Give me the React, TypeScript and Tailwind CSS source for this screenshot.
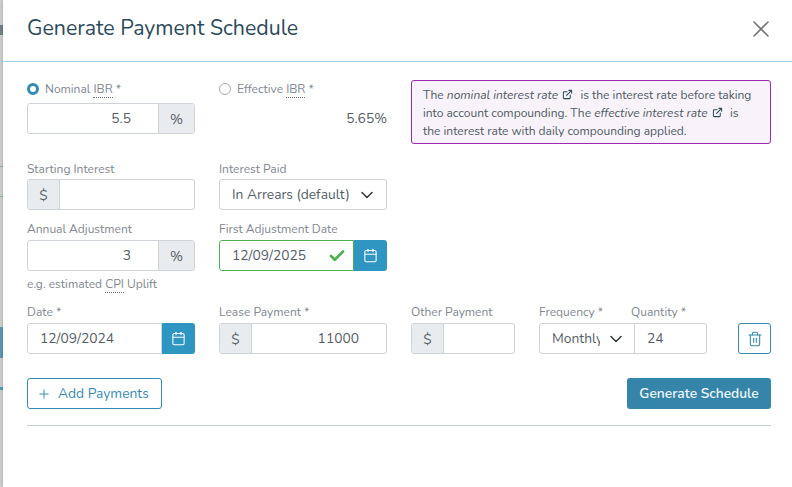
import React from "react";
import { Calendar, Check, ChevronDown, ExternalLink, Plus, Trash2, X } from "lucide-react";

const label = "text-[12px] leading-[14px] text-[#7f8790] whitespace-nowrap";
const valueText = "text-[13.8px] text-[#555e66] whitespace-nowrap";
const field = `h-[31px] border border-[#ced4da] rounded-[3px] bg-white flex items-center ${valueText}`;
const addon = "bg-[#e9ecef] flex items-center justify-center h-full pt-[1px] text-[#555e66] text-[14px]";
const Abbr = ({ children }: { children: React.ReactNode }) => (
  <span className="border-b border-dotted border-[#6c757d]">{children}</span>
);

function Percent({ value }: { value: string }) {
  return (
    <div className={`${field} w-[168px] overflow-hidden`}>
      <div className="flex-1 text-right pr-[27px] pt-[1px]">{value}</div>
      <div className={`${addon} w-[36px] border-l border-[#ced4da]`}>%</div>
    </div>
  );
}

function Money({ value, width }: { value?: string; width: string }) {
  return (
    <div className={`${field} ${width} overflow-hidden`}>
      <div className={`${addon} w-[32px] border-r border-[#ced4da]`}>$</div>
      <div className="flex-1 text-right pr-[27px] pt-[1px]">{value}</div>
    </div>
  );
}

function DateField({ value, valid }: { value: string; valid?: boolean }) {
  return (
    <div className="flex h-[31px] w-[168px] rounded-[3px] overflow-hidden">
      <div className={`flex-1 flex items-center pl-[12px] pr-[7px] border rounded-l-[3px] ${valueText} ${valid ? "border-[#4caf50]" : "border-[#ced4da]"}`}>
        <span className="flex-1 pt-[1px]">{value}</span>
        {valid && <Check size={18} strokeWidth={3.5} className="text-[#4caf50]" />}
      </div>
      <div className="w-[33px] bg-[#2f96c2] flex items-center justify-center">
        <Calendar size={15} strokeWidth={1.7} className="text-white" />
      </div>
    </div>
  );
}

function BackdropStrip() {
  return (
    <div className="w-[3px] h-full shrink-0 bg-[#d2d2d2] flex flex-col">
      <div className="h-[25px]" />
      <div className="h-[10px] bg-[#75858c]" />
      <div className="h-[26px]" />
      <div className="h-[1px] bg-[#a6d3e8]" />
      <div className="h-[104px]" />
      <div className="h-[1px] bg-[#8fc08f]" />
      <div className="h-[29px]" />
      <div className="h-[1px] bg-[#8fc08f]" />
      <div className="h-[130px]" />
      <div className="h-[31px] bg-[#5f9ab4]" />
      <div className="h-[29px]" />
      <div className="h-[3px] bg-[#5f9ab4]" />
    </div>
  );
}

export default function App() {
  return (
    <div className="flex w-[792px] h-[487px] overflow-hidden font-['Nunito','Lato','Noto_Sans',sans-serif]">
      <BackdropStrip />
      <div className="flex-1 h-full bg-white shadow-[0_0_4px_rgba(0,0,0,0.25)]">
        <div className="h-[62px] border-b border-[#a6d3e8] flex items-center pb-[4px] pl-[24px] pr-[17px] justify-between">
          <h1 className="text-[21.3px] text-[#2c4a5a] font-normal">Generate Payment Schedule</h1>
          <X size={28} strokeWidth={1.4} className="text-[#777]" />
        </div>
        <div className="pl-[24px] pr-[21px] pt-[18px]">
          <div className="flex">
            <div className="w-[192px]">
              <div className={`${label} flex items-center gap-[6px] h-[18px]`}>
                <span className="w-[12px] h-[12px] rounded-full border-[3.5px] border-[#348ab0] bg-white" />
                <span>Nominal <Abbr>IBR</Abbr> *</span>
              </div>
              <div className="mt-[5px]"><Percent value="5.5" /></div>
            </div>
            <div className="w-[192px] pr-[24px]">
              <div className={`${label} flex items-center gap-[6px] h-[18px]`}>
                <span className="w-[12px] h-[12px] rounded-full border border-[#aaa] bg-white" />
                <span>Effective <Abbr>IBR</Abbr> *</span>
              </div>
              <div className={`mt-[5px] h-[31px] pt-[1px] flex items-center justify-end ${valueText}`}>5.65%</div>
            </div>
            <div className="w-[360px] h-[64px] border border-[#9c27b0] rounded-[3px] bg-[#f8f3fa] px-[11px] py-[5px] text-[12px] leading-[18px] text-[#4f5a63] whitespace-nowrap">
              <div>The <em>nominal interest rate</em> <ExternalLink size={11} strokeWidth={2.2} className="inline -mt-[4px] mx-[1px] text-[#2c4a5a]" /> &nbsp;is the interest rate before taking</div>
              <div>into account compounding. The <em>effective interest rate</em> <ExternalLink size={11} strokeWidth={2.2} className="inline -mt-[4px] mx-[1px] text-[#2c4a5a]" /> &nbsp;is</div>
              <div>the interest rate with daily compounding applied.</div>
            </div>
          </div>

          <div className="flex mt-[18px]">
            <div className="w-[192px]">
              <div className={label}>Starting Interest</div>
              <div className="mt-[3px]"><Money width="w-[168px]" /></div>
            </div>
            <div className="w-[192px]">
              <div className={label}>Interest Paid</div>
              <div className={`${field} mt-[3px] w-[168px] pl-[12px] pr-[9px] justify-between`}>
                <span className="pt-[1px]">In Arrears (default)</span>
                <ChevronDown size={20} strokeWidth={1.9} className="text-[#343a40]" />
              </div>
            </div>
          </div>

          <div className="flex mt-[12px]">
            <div className="w-[192px]">
              <div className={label}>Annual Adjustment</div>
              <div className="mt-[4px]"><Percent value="3" /></div>
              <div className={`${label} mt-[6px]`}>e.g. estimated <Abbr>CPI</Abbr> Uplift</div>
            </div>
            <div className="w-[192px]">
              <div className={label}>First Adjustment Date</div>
              <div className="mt-[4px]"><DateField value="12/09/2025" valid /></div>
            </div>
          </div>

          <div className="flex mt-[14px] items-end">
            <div className="w-[192px]">
              <div className={label}>Date *</div>
              <div className="mt-[4px]"><DateField value="12/09/2024" /></div>
            </div>
            <div className="w-[192px]">
              <div className={label}>Lease Payment *</div>
              <div className="mt-[4px]"><Money value="11000" width="w-[168px]" /></div>
            </div>
            <div className="w-[128px]">
              <div className={label}>Other Payment</div>
              <div className="mt-[4px]"><Money width="w-[104px]" /></div>
            </div>
            <div className="w-[168px]">
              <div className={`${label} flex`}>
                <span className="w-[92px]">Frequency *</span>
                <span>Quantity *</span>
              </div>
              <div className={`${field} mt-[4px] w-[168px]`}>
                <div className="w-[95px] pl-[12px] pr-[8px] flex items-center justify-between h-full border-r border-[#ced4da]">
                  <span className="w-[48px] overflow-hidden pt-[1px]">Monthly</span>
                  <ChevronDown size={20} strokeWidth={1.9} className="text-[#343a40]" />
                </div>
                <span className="pl-[12px] pt-[1px]">24</span>
              </div>
            </div>
            <div className="flex-1 flex justify-end">
              <div className="w-[33px] h-[31px] border border-[#348ab0] rounded-[3px] flex items-center justify-center">
                <Trash2 size={16} strokeWidth={1.6} className="text-[#348ab0]" />
              </div>
            </div>
          </div>

          <div className="flex justify-between mt-[24px]">
            <div className="w-[135px] h-[31px] border border-[#348ab0] rounded-[3px] flex items-center pl-[9px] gap-[7px] text-[13.8px] text-[#348ab0]">
              <Plus size={14} strokeWidth={1.7} />
              <span className="pt-[1px]">Add Payments</span>
            </div>
            <div className="w-[144px] h-[31px] pt-[1px] bg-[#3585aa] rounded-[3px] flex items-center justify-center text-[13.8px] font-semibold text-[#f2f8fb]">
              Generate Schedule
            </div>
          </div>
          <div className="mt-[16px] border-t border-[#c8cfd0]" />
        </div>
      </div>
    </div>
  );
}
